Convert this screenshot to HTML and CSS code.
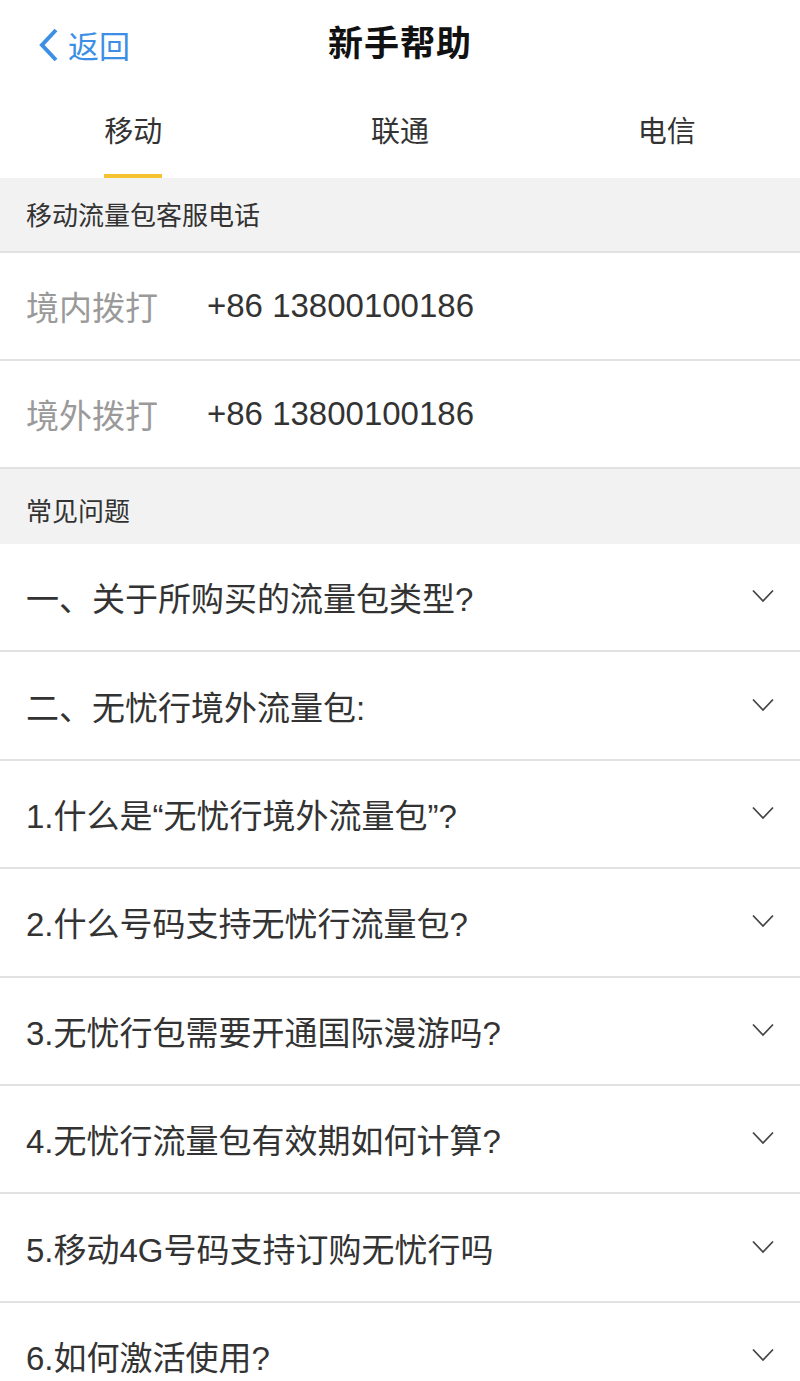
FILE: index.html
```html
<!DOCTYPE html>
<html lang="zh-CN">
<head>
  <meta charset="UTF-8">
  <meta name="viewport" content="width=device-width, initial-scale=1.0">
  <title>新手帮助</title>
  <link rel="stylesheet" href="styles.css">
</head>
<body>
  <div class="header">
    <a class="back" href="#">
      <svg class="back-icon" width="22" height="34" viewBox="0 0 22 34"><path d="M19 2 L5 17 L19 32" fill="none" stroke="#3d8fe6" stroke-width="4" stroke-linejoin="miter"/></svg>
      <span>返回</span>
    </a>
    <h1>新手帮助</h1>
  </div>

  <div class="tabs">
    <div class="tab active"><span>移动</span></div>
    <div class="tab"><span>联通</span></div>
    <div class="tab"><span>电信</span></div>
  </div>

  <div class="section-title">移动流量包客服电话</div>
  <div class="phone-row">
    <span class="label">境内拨打</span>
    <span class="number">+86 13800100186</span>
  </div>
  <div class="phone-row">
    <span class="label">境外拨打</span>
    <span class="number">+86 13800100186</span>
  </div>

  <div class="section-title faq-title">常见问题</div>
  <div class="faq-list">
    <div class="faq-item"><span>一、关于所购买的流量包类型?</span><svg class="arrow" width="22" height="14" viewBox="0 0 22 14"><polyline points="1,1.5 11,12 21,1.5" fill="none" stroke="#444" stroke-width="1.8"/></svg></div>
    <div class="faq-item"><span>二、无忧行境外流量包:</span><svg class="arrow" width="22" height="14" viewBox="0 0 22 14"><polyline points="1,1.5 11,12 21,1.5" fill="none" stroke="#444" stroke-width="1.8"/></svg></div>
    <div class="faq-item"><span>1.什么是“无忧行境外流量包”?</span><svg class="arrow" width="22" height="14" viewBox="0 0 22 14"><polyline points="1,1.5 11,12 21,1.5" fill="none" stroke="#444" stroke-width="1.8"/></svg></div>
    <div class="faq-item"><span>2.什么号码支持无忧行流量包?</span><svg class="arrow" width="22" height="14" viewBox="0 0 22 14"><polyline points="1,1.5 11,12 21,1.5" fill="none" stroke="#444" stroke-width="1.8"/></svg></div>
    <div class="faq-item"><span>3.无忧行包需要开通国际漫游吗?</span><svg class="arrow" width="22" height="14" viewBox="0 0 22 14"><polyline points="1,1.5 11,12 21,1.5" fill="none" stroke="#444" stroke-width="1.8"/></svg></div>
    <div class="faq-item"><span>4.无忧行流量包有效期如何计算?</span><svg class="arrow" width="22" height="14" viewBox="0 0 22 14"><polyline points="1,1.5 11,12 21,1.5" fill="none" stroke="#444" stroke-width="1.8"/></svg></div>
    <div class="faq-item"><span>5.移动4G号码支持订购无忧行吗</span><svg class="arrow" width="22" height="14" viewBox="0 0 22 14"><polyline points="1,1.5 11,12 21,1.5" fill="none" stroke="#444" stroke-width="1.8"/></svg></div>
    <div class="faq-item"><span>6.如何激活使用?</span><svg class="arrow" width="22" height="14" viewBox="0 0 22 14"><polyline points="1,1.5 11,12 21,1.5" fill="none" stroke="#444" stroke-width="1.8"/></svg></div>
  </div>
</body>
</html>
```

FILE: styles.css
```css
body {
  font-family: "Liberation Sans", "Noto Sans CJK SC", sans-serif;
  background: #fff;
  color: #333;
  margin: 0;
  padding: 0;
}
.header {
  position: relative;
  height: 80px;
  display: flex;
  align-items: center;
  justify-content: center;
}
.header h1 {
  margin: 0;
  font-size: 35px;
  font-weight: 700;
  color: #111;
  letter-spacing: 1px;
}
.back {
  position: absolute;
  left: 37px;
  top: 22px;
  display: flex;
  align-items: center;
  gap: 9px;
  color: #3d8fe6;
  text-decoration: none;
  font-size: 31px;
}
.tabs {
  display: flex;
  height: 98px;
}
.tab {
  flex: 1;
  display: flex;
  justify-content: center;
}
.tab span {
  font-size: 29px;
  color: #333;
  padding-top: 28px;
  height: 66px;
  border-bottom: 4px solid transparent;
}
.tab.active span {
  border-bottom-color: #f5c232;
}
.section-title {
  background: #f2f2f2;
  font-size: 26px;
  color: #333;
  height: 73px;
  line-height: 76px;
  padding-left: 26px;
  border-bottom: 2px solid #e2e2e2;
}
.faq-title {
  height: 75px;
  line-height: 86px;
  border-bottom: none;
}
.phone-row {
  display: flex;
  align-items: center;
  height: 106px;
  padding-left: 26px;
  border-bottom: 2px solid #e2e2e2;
  font-size: 33px;
}
.label {
  color: #9a9a9a;
  width: 181px;
}
.number {
  color: #333;
  font-size: 33px;
}
.faq-item {
  display: flex;
  align-items: center;
  justify-content: space-between;
  height: 106.4px;
  padding: 0 26px 0 26px;
  border-bottom: 2px solid #e2e2e2;
  font-size: 33px;
  color: #333;
}
.arrow {
  flex-shrink: 0;
  margin-top: -2px;
}
```
